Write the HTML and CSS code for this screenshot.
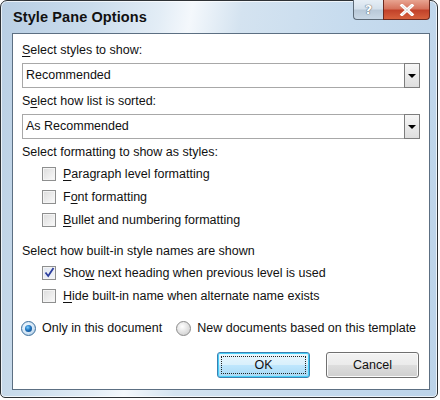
FILE: index.html
```html
<!DOCTYPE html>
<html>
<head>
<meta charset="utf-8">
<link rel="stylesheet" href="styles.css">
</head>
<body>
<div class="window">
  <div class="titlebar">
    <div class="title">Style Pane Options</div>
    <div class="controls">
      <div class="cbtn help"><span>?</span></div>
      <div class="cbtn close">
        <svg width="16" height="12" viewBox="0 0 16 12"><path d="M3 1.5 L13 10.5 M13 1.5 L3 10.5" stroke="#fff" stroke-width="3.2" stroke-linecap="square" fill="none"/><path d="M3 1.5 L13 10.5 M13 1.5 L3 10.5" stroke="#5a5a5a" stroke-width="0.6" fill="none" opacity="0.35"/></svg>
      </div>
    </div>
  </div>
  <div class="client">
    <div class="label first"><u>S</u>elect styles to show:</div>
    <div class="combo"><span class="ctext">Recommended</span><span class="cdrop"><i class="tri"></i></span></div>
    <div class="label"><span>S</span><u>e</u>lect how list is sorted:</div>
    <div class="combo"><span class="ctext">As Recommended</span><span class="cdrop"><i class="tri"></i></span></div>
    <div class="label">Select formatting to show as styles:</div>
    <div class="checks">
      <div class="check"><span class="box"></span><span><u>P</u>aragraph level formatting</span></div>
      <div class="check"><span class="box"></span><span>F<u>o</u>nt formatting</span></div>
      <div class="check"><span class="box"></span><span><u>B</u>ullet and numbering formatting</span></div>
    </div>
    <div class="label sect">Select how built-in style names are shown</div>
    <div class="checks">
      <div class="check"><span class="box checked"><svg width="11" height="11" viewBox="0 0 11 11"><path d="M1.5 5.5 L4.2 9 L9.5 1" stroke="#2d3f9e" stroke-width="1.8" fill="none"/></svg></span><span>Sho<u>w</u> next heading when previous level is used</span></div>
      <div class="check"><span class="box"></span><span><u>H</u>ide built-in name when alternate name exists</span></div>
    </div>
    <div class="radios">
      <div class="radio"><span class="rb on"><i></i></span><span>Only in this document</span></div>
      <div class="radio"><span class="rb"></span><span>New documents based on this template</span></div>
    </div>
    <div class="buttons">
      <div class="btn default"><span class="focus">OK</span></div>
      <div class="btn">Cancel</div>
    </div>
  </div>
</div>
</body>
</html>
```
FILE: styles.css
```css
html, body {
  margin: 0;
  padding: 0;
  background: #ffffff;
}
body {
  width: 440px;
  height: 400px;
  font-family: "Liberation Sans", Arial, sans-serif;
  font-size: 12.5px;
  color: #111;
}
.window {
  width: 436px;
  height: 396px;
  border: 1px solid #2e3236;
  border-radius: 7px 7px 5px 5px;
  background: linear-gradient(100deg, #b8cee3 0%, #cadcec 18%, #e3edf6 32%, #f4f8fc 38%, #d4e3f0 48%, #c6dbee 70%, #bcd3e9 100%);
  display: flex;
  flex-direction: column;
  box-shadow: inset 0 0 0 1px rgba(255,255,255,0.7);
}
.titlebar {
  height: 32px;
  display: flex;
  justify-content: space-between;
  align-items: flex-start;
  padding-left: 12px;
}
.title {
  font-weight: bold;
  font-size: 14.5px;
  color: #111;
  margin-top: 8px;
  letter-spacing: 0.1px;
}
.controls {
  display: flex;
  margin-right: 7px;
  margin-top: -1px;
}
.cbtn {
  height: 19px;
  display: flex;
  align-items: center;
  justify-content: center;
  border: 1px solid #5d6b78;
  border-top: none;
}
.help {
  width: 29px;
  border-radius: 0 0 0 4px;
  border-right: none;
  background: linear-gradient(#e6eef6 0%, #d5e1ec 45%, #b9c9d8 55%, #c9d8e6 100%);
}
.help span {
  font-family: "DejaVu Sans", sans-serif;
  font-weight: bold;
  font-size: 13px;
  color: #fff;
  text-shadow: 0 0 1px #4a5560, 0 0 1px #4a5560;
}
.close {
  width: 45px;
  border-radius: 0 0 4px 0;
  background: linear-gradient(#e8a491 0%, #d6745e 45%, #c2422a 55%, #d7613d 100%);
  border-color: #6c2a20;
}
.client {
  flex: 1;
  margin: 0 7px 7px 11px;
  border: 1px solid #5c6f82;
  background: #ffffff;
  padding: 0 9px 0 9px;
  display: flex;
  flex-direction: column;
}
.label {
  height: 16px;
  line-height: 16px;
  margin-top: 5px;
  white-space: nowrap;
}
.label.first {
  margin-top: 8px;
}
.label.sect {
  margin-top: 12px;
}
u {
  text-decoration: underline;
  text-underline-offset: 2px;
}
.combo {
  height: 23px;
  margin-top: 5px;
  border: 1px solid #a8a8a8;
  display: flex;
  align-items: stretch;
  justify-content: space-between;
  background: #fff;
}
.ctext {
  padding-left: 3px;
  line-height: 23px;
}
.cdrop {
  width: 14px;
  border: 1px solid #7d7d7d;
  margin: -1px -1px -1px 0;
  background: linear-gradient(#f6f6f6, #dedede);
  display: flex;
  align-items: center;
  justify-content: center;
}
.tri {
  width: 0;
  height: 0;
  border-left: 4px solid transparent;
  border-right: 4px solid transparent;
  border-top: 4px solid #000;
  margin-top: 1px;
}
.checks {
  display: flex;
  flex-direction: column;
  padding-left: 20px;
  margin-top: 2px;
}
.check {
  height: 23px;
  display: flex;
  align-items: center;
  gap: 7px;
  white-space: nowrap;
}
.box {
  flex-shrink: 0;
  width: 12px;
  height: 12px;
  border: 1px solid #8e8f8f;
  background: linear-gradient(135deg, #dcdcdc 0%, #eeeeee 60%, #fafafa 100%);
  box-shadow: inset 0 0 0 1px #f4f4f4;
  display: flex;
  align-items: center;
  justify-content: center;
}
.box.checked {
  background: linear-gradient(135deg, #e0e6f0 0%, #f4f6fa 100%);
}
.radios {
  display: flex;
  margin-top: 10px;
  height: 22px;
  align-items: center;
  margin-left: -1px;
  gap: 14px;
  white-space: nowrap;
}
.radio {
  display: flex;
  align-items: center;
  gap: 6px;
  flex-shrink: 0;
}
.rb {
  flex-shrink: 0;
  width: 13px;
  height: 13px;
  border-radius: 50%;
  border: 1px solid #8a8a8a;
  background: radial-gradient(circle at 40% 35%, #ffffff 0%, #e6e6e6 45%, #c8c8c8 100%);
  display: flex;
  align-items: center;
  justify-content: center;
}
.rb.on {
  border-color: #3c6f9c;
  background: radial-gradient(circle at 40% 35%, #f6fbff 0%, #cfe3f4 60%, #8fb4d4 100%);
}
.rb.on i {
  width: 7px;
  height: 7px;
  border-radius: 50%;
  background: radial-gradient(circle at 40% 35%, #7fd0ff 0%, #1f74c0 45%, #0c3f7a 100%);
}
.buttons {
  display: flex;
  justify-content: flex-end;
  gap: 16px;
  margin-top: 13px;
  padding-right: 1px;
}
.btn {
  width: 93px;
  height: 26px;
  border: 1px solid #707070;
  border-radius: 3px;
  background: linear-gradient(#f3f3f3 0%, #ebebeb 48%, #dddddd 52%, #cfcfcf 100%);
  box-shadow: inset 0 0 0 1px #fbfbfb;
  display: flex;
  align-items: center;
  justify-content: center;
  box-sizing: border-box;
}
.btn.default {
  border-color: #3c7fb1;
  box-shadow: inset 0 0 0 1px #48d0f8;
  background: linear-gradient(#eaf6fd 0%, #d9f0fc 48%, #bee6fd 52%, #a7d9f5 100%);
  padding: 3px;
}
.focus {
  flex: 1;
  align-self: stretch;
  border: 1px dotted #222;
  display: flex;
  align-items: center;
  justify-content: center;
}
```
